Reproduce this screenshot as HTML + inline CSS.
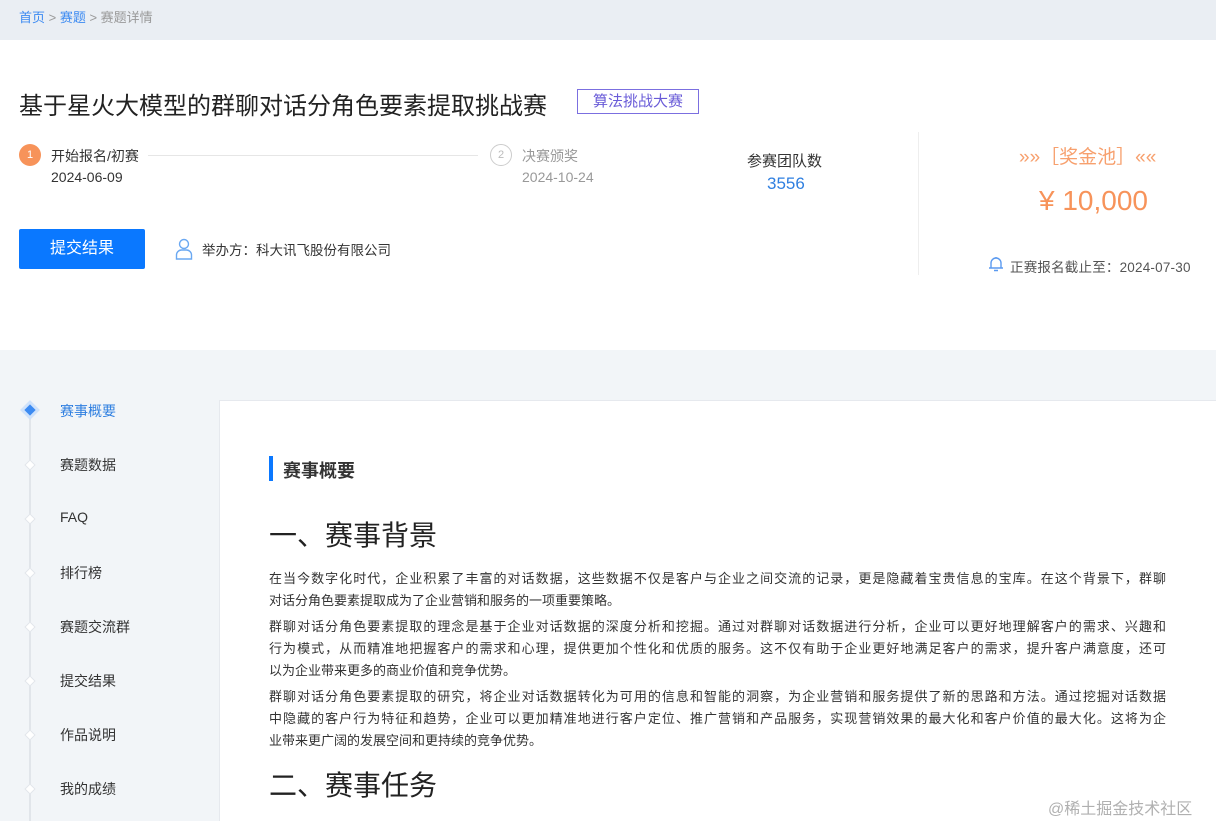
<!DOCTYPE html>
<html><head><meta charset="utf-8"><style>
*{margin:0;padding:0;box-sizing:border-box}
body{width:1216px;height:821px;overflow:hidden;font-family:"Liberation Sans","Noto Sans CJK SC",sans-serif;background:#f2f5f8;position:relative;color:#333}
.a{position:absolute;white-space:nowrap}
.l{display:block;text-align:justify;text-align-last:justify;white-space:nowrap;height:22px}
.e{display:block;white-space:nowrap;height:22px}
</style></head><body>
<div class="a" style="left:0;top:0;width:1216px;height:40px;background:#eaeef3"></div>
<div class="a" style="left:19px;top:7px;font-size:13px;color:#999"><span style="color:#3d8bf2">首页</span> &gt; <span style="color:#3d8bf2">赛题</span> &gt; 赛题详情</div>
<div class="a" style="left:0;top:40px;width:1216px;height:310px;background:#fff"></div>
<div class="a" style="left:19px;top:86px;font-size:24px;color:#222">基于星火大模型的群聊对话分角色要素提取挑战赛</div>
<div class="a" style="left:577px;top:89px;width:122px;height:25px;border:1px solid #7b6fe0;color:#6a5cd8;font-size:15px;text-align:center;line-height:23px">算法挑战大赛</div>
<div class="a" style="left:19px;top:144px;width:22px;height:22px;border-radius:50%;background:#f7935a;color:#fff;font-size:11px;text-align:center;line-height:22px">1</div>
<div class="a" style="left:51px;top:146px;font-size:14px;color:#333">开始报名/初赛</div>
<div class="a" style="left:51px;top:169px;font-size:14px;color:#333">2024-06-09</div>
<div class="a" style="left:148px;top:155px;width:330px;height:1px;background:#e6e6e6"></div>
<div class="a" style="left:490px;top:144px;width:22px;height:22px;border-radius:50%;border:1px solid #ccc;color:#bbb;font-size:11px;text-align:center;line-height:20px">2</div>
<div class="a" style="left:522px;top:146px;font-size:14px;color:#999">决赛颁奖</div>
<div class="a" style="left:522px;top:169px;font-size:14px;color:#999">2024-10-24</div>
<div class="a" style="left:747px;top:150px;font-size:15px;color:#333">参赛团队数</div>
<div class="a" style="left:767px;top:174px;font-size:17px;color:#2f7fe0">3556</div>
<div class="a" style="left:918px;top:132px;width:1px;height:143px;background:#eee"></div>
<div class="a" style="left:1019px;top:142px;font-size:19px;color:#f7a06e">»»［奖金池］««</div>
<div class="a" style="left:1039px;top:185px;font-size:28px;color:#f7935a">¥ 10,000</div>
<svg class="a" style="left:987px;top:255px" width="18" height="18" viewBox="0 0 18 18"><path d="M9 2v1M4 13V8a5 5 0 0 1 10 0v5M2 13h14M7 15.5h4" stroke="#5b9af0" stroke-width="1.4" fill="none"/></svg>
<div class="a" style="left:1010px;top:256px;font-size:13.5px;letter-spacing:0.2px;color:#555">正赛报名截止至：2024-07-30</div>
<div class="a" style="left:19px;top:229px;width:126px;height:40px;background:#0a78ff;border-radius:2px;color:#fff;font-size:16px;text-align:center;line-height:40px">提交结果</div>
<svg class="a" style="left:175px;top:238px" width="18" height="22" viewBox="0 0 18 22"><circle cx="9" cy="6" r="4.5" stroke="#6aa8f2" stroke-width="1.4" fill="none"/><path d="M1.5 21v-4a5 5 0 0 1 5-5h5a5 5 0 0 1 5 5v4z" stroke="#6aa8f2" stroke-width="1.4" fill="none"/></svg>
<div class="a" style="left:202px;top:239px;font-size:13.5px;color:#333">举办方：科大讯飞股份有限公司</div>
<div class="a" style="left:29px;top:410px;width:2px;height:411px;background:#e1e5ea"></div>
<div class="a" style="left:23px;top:403px;width:14px;height:14px;transform:rotate(45deg);background:#cfe2fb"></div>
<div class="a" style="left:26px;top:406px;width:8px;height:8px;transform:rotate(45deg);background:#3d8bf2"></div>
<div class="a" style="left:60px;top:401px;font-size:14px;color:#2f7fe0">赛事概要</div>
<div class="a" style="left:26px;top:461px;width:8px;height:8px;transform:rotate(45deg);background:#fff;border:1px solid #e1e5ea"></div><div class="a" style="left:60px;top:455px;font-size:14px">赛题数据</div>
<div class="a" style="left:26px;top:515px;width:8px;height:8px;transform:rotate(45deg);background:#fff;border:1px solid #e1e5ea"></div><div class="a" style="left:60px;top:509px;font-size:14px">FAQ</div>
<div class="a" style="left:26px;top:569px;width:8px;height:8px;transform:rotate(45deg);background:#fff;border:1px solid #e1e5ea"></div><div class="a" style="left:60px;top:563px;font-size:14px">排行榜</div>
<div class="a" style="left:26px;top:623px;width:8px;height:8px;transform:rotate(45deg);background:#fff;border:1px solid #e1e5ea"></div><div class="a" style="left:60px;top:617px;font-size:14px">赛题交流群</div>
<div class="a" style="left:26px;top:677px;width:8px;height:8px;transform:rotate(45deg);background:#fff;border:1px solid #e1e5ea"></div><div class="a" style="left:60px;top:671px;font-size:14px">提交结果</div>
<div class="a" style="left:26px;top:731px;width:8px;height:8px;transform:rotate(45deg);background:#fff;border:1px solid #e1e5ea"></div><div class="a" style="left:60px;top:725px;font-size:14px">作品说明</div>
<div class="a" style="left:26px;top:785px;width:8px;height:8px;transform:rotate(45deg);background:#fff;border:1px solid #e1e5ea"></div><div class="a" style="left:60px;top:779px;font-size:14px">我的成绩</div>
<div class="a" style="left:219px;top:400px;width:997px;height:421px;background:#fff;border-left:1px solid #e6e9ee;border-top:1px solid #e6e9ee"></div>
<div class="a" style="left:269px;top:456px;width:4px;height:25px;background:#0a78ff"></div>
<div class="a" style="left:283px;top:457px;font-size:18px;font-weight:bold;color:#333">赛事概要</div>
<div class="a" style="left:269px;top:514px;font-size:28px;color:#222">一、赛事背景</div>
<div class="a" style="left:269px;top:568px;width:897px;font-size:13px;line-height:22px;color:#333">
<div style="margin-bottom:4px"><span class="l">在当今数字化时代，企业积累了丰富的对话数据，这些数据不仅是客户与企业之间交流的记录，更是隐藏着宝贵信息的宝库。在这个背景下，群聊</span><span class="e">对话分角色要素提取成为了企业营销和服务的一项重要策略。</span></div>
<div style="margin-bottom:4px"><span class="l">群聊对话分角色要素提取的理念是基于企业对话数据的深度分析和挖掘。通过对群聊对话数据进行分析，企业可以更好地理解客户的需求、兴趣和</span><span class="l">行为模式，从而精准地把握客户的需求和心理，提供更加个性化和优质的服务。这不仅有助于企业更好地满足客户的需求，提升客户满意度，还可</span><span class="e">以为企业带来更多的商业价值和竞争优势。</span></div>
<div><span class="l">群聊对话分角色要素提取的研究，将企业对话数据转化为可用的信息和智能的洞察，为企业营销和服务提供了新的思路和方法。通过挖掘对话数据</span><span class="l">中隐藏的客户行为特征和趋势，企业可以更加精准地进行客户定位、推广营销和产品服务，实现营销效果的最大化和客户价值的最大化。这将为企</span><span class="e">业带来更广阔的发展空间和更持续的竞争优势。</span></div>
</div>
<div class="a" style="left:269px;top:764px;font-size:28px;color:#222">二、赛事任务</div>
<div class="a" style="left:1048px;top:795px;font-size:16px;color:#b0b0b0">@稀土掘金技术社区</div>
</body></html>
